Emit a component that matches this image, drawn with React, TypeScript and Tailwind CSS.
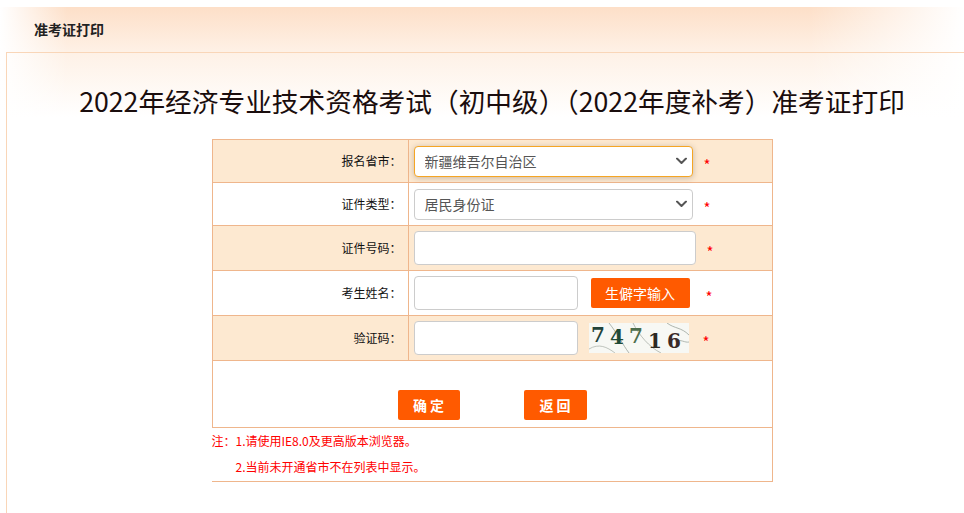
import React, { useState } from 'react';

const Star: React.FC<{ className?: string }> = ({ className = '' }) => (
    <span className={`text-[15px] leading-none text-[#ff0000] ${className}`}>*</span>
);

const Chevron: React.FC = () => (
    <svg className="pointer-events-none absolute right-[6px] top-1/2 -translate-y-1/2" width="11" height="7" viewBox="0 0 11 7" fill="none">
        <path d="M1 1l4.5 4.5L10 1" stroke="#555" strokeWidth="2" strokeLinecap="round" strokeLinejoin="round" />
    </svg>
);

const Captcha: React.FC = () => (
    <svg width="100" height="30" viewBox="0 0 100 30" className="block">
        <rect width="100" height="30" fill="#f7f8f4" />
        <path d="M20 0 C 28 10, 34 22, 40 30" stroke="#9aa39a" strokeWidth="0.8" fill="none" />
        <path d="M44 0 C 50 12, 60 24, 72 30" stroke="#a9b0a8" strokeWidth="0.8" fill="none" />
        <path d="M78 0 C 86 6, 92 4, 100 12" stroke="#9aa39a" strokeWidth="0.8" fill="none" />
        <path d="M0 26 C 10 20, 18 24, 26 30" stroke="#b0b6ae" strokeWidth="0.8" fill="none" />
        <path d="M86 18 C 92 16, 96 20, 100 19" stroke="#a0a89f" strokeWidth="0.8" fill="none" />
        <text x="2" y="19" fill="#23433a" fontSize="20" fontWeight="700" fontFamily="'DejaVu Serif', serif">7</text>
        <text x="21" y="21" fill="#1f4a36" fontSize="20" fontWeight="700" fontFamily="'DejaVu Serif', serif">4</text>
        <text x="40" y="20" fill="#4d6d4c" fontSize="20" fontWeight="700" fontFamily="'DejaVu Serif', serif">7</text>
        <text x="59" y="25" fill="#2d2a22" fontSize="20" fontWeight="700" fontFamily="'DejaVu Serif', serif">1</text>
        <text x="78" y="25" fill="#3a2a27" fontSize="20" fontWeight="700" fontFamily="'DejaVu Serif', serif">6</text>
    </svg>
);

const Label: React.FC<{ text: string }> = ({ text }) => (
    <div className="flex w-[196px] shrink-0 items-center justify-end border-r border-[#efb68c] pr-[6px] text-[12px] text-[#111]">
        {text}
    </div>
);

export default function App() {
    const [province, setProvince] = useState('65');
    const [idType, setIdType] = useState('1');

    return (
        <div className="h-[513px] w-[964px] overflow-hidden bg-white pt-[7px] font-['Noto_Sans_CJK_SC',sans-serif]">
            <div className="h-[506px] bg-[linear-gradient(to_right,#fff_0%,rgba(255,255,255,0)_7%,rgba(255,255,255,0)_84%,#fff_100%),linear-gradient(to_bottom,#fddfc8_0px,#fef1e6_45px,#fff_110px)]">
                <header className="flex h-[45px] items-center pl-[34px] text-[14px] font-bold text-[#222]">准考证打印</header>

                <div className="ml-[6px] h-[461px] w-[971px] border-l border-t border-[#f9d6b8]">
                    <h1 className="mt-[28px] whitespace-nowrap text-center text-[26.7px] leading-[40px] text-[#1a0d0d]">
                        2022年经济专业技术资格考试（初中级）（2022年度补考）准考证打印
                    </h1>

                    <div className="mx-auto mt-[18px] w-[561px] border border-[#efb68c] bg-white">
                        <div className="flex h-[43px] border-b border-[#efb68c] bg-[#fde9d1]">
                            <Label text="报名省市：" />
                            <div className="flex items-center pl-[5px]">
                                <div className="relative">
                                    <select
                                        value={province}
                                        onChange={(e) => setProvince(e.target.value)}
                                        className="h-[31px] w-[279px] appearance-none rounded-[4px] border border-[#f5a524] bg-white pl-[10px] text-[14px] text-[#555] shadow-[0_1px_6px_rgba(0,0,0,0.22)] outline-none"
                                    >
                                        <option value="65">新疆维吾尔自治区</option>
                                    </select>
                                    <Chevron />
                                </div>
                                <Star className="ml-[11px] mt-[6px]" />
                            </div>
                        </div>

                        <div className="flex h-[43px] border-b border-[#efb68c] bg-white">
                            <Label text="证件类型：" />
                            <div className="flex items-center pl-[5px]">
                                <div className="relative">
                                    <select
                                        value={idType}
                                        onChange={(e) => setIdType(e.target.value)}
                                        className="h-[31px] w-[279px] appearance-none rounded-[4px] border border-[#cccccc] bg-white pl-[10px] text-[14px] text-[#555] outline-none"
                                    >
                                        <option value="1">居民身份证</option>
                                    </select>
                                    <Chevron />
                                </div>
                                <Star className="ml-[11px] mt-[6px]" />
                            </div>
                        </div>

                        <div className="flex h-[45px] border-b border-[#efb68c] bg-[#fde9d1]">
                            <Label text="证件号码：" />
                            <div className="flex items-center pl-[5px]">
                                <input type="text" className="h-[34px] w-[282px] rounded-[4px] border border-[#cccccc] bg-white px-[10px] text-[14px] outline-none" />
                                <Star className="ml-[11px] mt-[6px]" />
                            </div>
                        </div>

                        <div className="flex h-[45px] border-b border-[#efb68c] bg-white">
                            <Label text="考生姓名：" />
                            <div className="flex items-center pl-[5px]">
                                <input type="text" className="h-[34px] w-[164px] rounded-[4px] border border-[#cccccc] bg-white px-[10px] text-[14px] outline-none" />
                                <button className="ml-[13px] h-[30px] w-[99px] rounded-[2px] bg-[#ff5a00] text-[14px] text-white">生僻字输入</button>
                                <Star className="ml-[16px] mt-[6px]" />
                            </div>
                        </div>

                        <div className="flex h-[45px] border-b border-[#efb68c] bg-[#fde9d1]">
                            <Label text="验证码：" />
                            <div className="flex items-center pl-[5px]">
                                <input type="text" className="h-[34px] w-[164px] rounded-[4px] border border-[#cccccc] bg-white px-[10px] text-[14px] outline-none" />
                                <div className="ml-[11px]">
                                    <Captcha />
                                </div>
                                <Star className="ml-[14px] mt-[6px]" />
                            </div>
                        </div>

                        <div className="flex h-[67px] justify-center gap-[64px] border-b border-[#efb68c] bg-white pt-[29px]">
                            <button className="h-[30px] w-[62px] rounded-[2px] bg-[#ff5a00] text-[14px] font-bold text-white">确 定</button>
                            <button className="h-[30px] w-[63px] rounded-[2px] bg-[#ff5a00] text-[14px] font-bold text-white">返 回</button>
                        </div>

                        <div className="-ml-px h-[53px] bg-white text-[12px] leading-[26px] text-[#ff0000]">
                            <p>注：1.请使用IE8.0及更高版本浏览器。</p>
                            <p className="pl-[24px]">2.当前未开通省市不在列表中显示。</p>
                        </div>
                    </div>
                </div>
            </div>
        </div>
    );
}
